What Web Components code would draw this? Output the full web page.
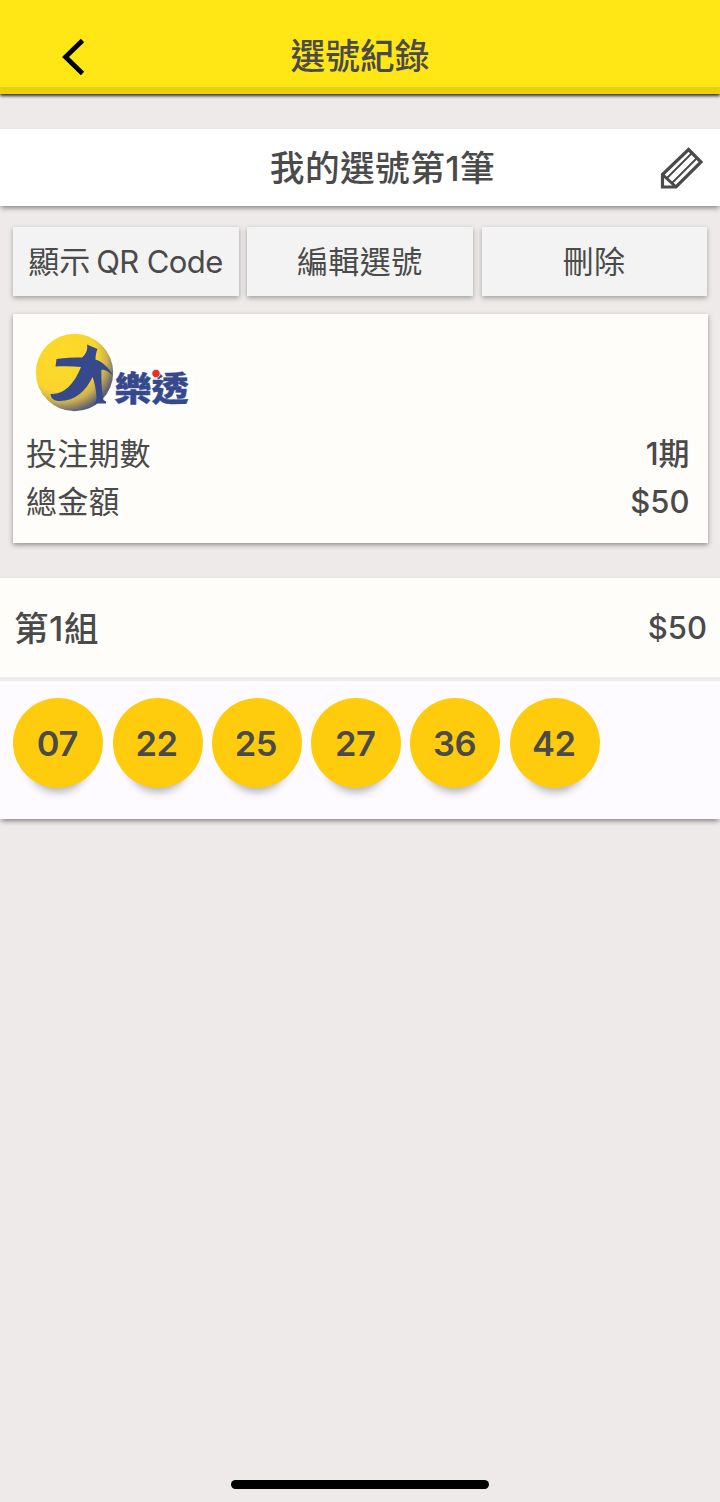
<!DOCTYPE html>
<html lang="zh-Hant">
<head>
<meta charset="utf-8">
<meta name="viewport" content="width=device-width, initial-scale=1">
<title>選號紀錄</title>
<style>
  body {
    margin: 0;
    background: #eeeaea;
    color: #4a4a4a;
    font-family: Inter, 'Noto Sans CJK TC', sans-serif;
    font-size: 31px;
  }
</style>
</head>
<body>
<record-page>
  <app-header slot="header">選號紀錄</app-header>
  <record-title>我的選號第1筆</record-title>
  <action-bar>
    <action-button>顯示<span style="margin-left: 6px; letter-spacing: -.6px">QR Code</span></action-button>
    <action-button style="letter-spacing: .4px">編輯選號</action-button>
    <action-button style="letter-spacing: .4px">刪除</action-button>
  </action-bar>
  <bet-card>
    <bet-row label="投注期數">1期</bet-row>
    <bet-row label="總金額">$50</bet-row>
  </bet-card>
  <number-group name="第1組" price="$50">
    <lotto-ball>07</lotto-ball>
    <lotto-ball>22</lotto-ball>
    <lotto-ball>25</lotto-ball>
    <lotto-ball>27</lotto-ball>
    <lotto-ball>36</lotto-ball>
    <lotto-ball>42</lotto-ball>
  </number-group>
</record-page>

<script>
// attach an open shadow root filled with the given markup
function render(el, html) {
  el.attachShadow({ mode: 'open' });
  const template = document.createElement('template');
  template.innerHTML = html;
  el.shadowRoot.appendChild(template.content.cloneNode(true));
}

class RecordPage extends HTMLElement {
  constructor() {
    super();
    render(this, `
      <style>
        :host {
          display: flex;
          flex-direction: column;
          box-sizing: border-box;
          height: 1502px;
          overflow: hidden;
        }
        main { flex: 1; padding-top: 35px; }
        .home {
          width: 258px;
          height: 9px;
          margin: 0 auto 13px;
          border-radius: 5px;
          background: #000;
        }
      </style>
      <slot name="header"></slot>
      <main><slot></slot></main>
      <div class="home"></div>
    `);
  }
}

class AppHeader extends HTMLElement {
  constructor() {
    super();
    render(this, `
      <style>
        :host {
          display: grid;
          grid-template-columns: 146px 1fr 146px;
          align-items: center;
          box-sizing: border-box;
          height: 94px;
          padding-top: 26px;
          background: #ffe716;
          border-bottom: 7px solid #e9d112;
          box-shadow: 0 2px 3px rgba(0, 0, 0, .8);
        }
        svg { display: block; margin: 0 auto; }
        h1 {
          margin: -2px 0 0;
          font-size: 34.7px;
          font-weight: 500;
          line-height: 50px;
          text-align: center;
        }
      </style>
      <svg width="24" height="38" viewBox="0 0 24 38">
        <path d="M21.500 2.500 4.500 19l17 16.500" fill="none" stroke="#000" stroke-width="4.800"/>
      </svg>
      <h1><slot></slot></h1>
    `);
  }
}

class RecordTitle extends HTMLElement {
  constructor() {
    super();
    render(this, `
      <style>
        :host {
          display: grid;
          grid-template-columns: 1fr 44px;
          align-items: center;
          box-sizing: border-box;
          height: 77px;
          padding: 0 16px 0 105px;
          background: #fff;
          box-shadow: 0 3px 5px -1px rgba(0, 0, 0, .45);
        }
        h2 {
          margin: 0;
          font-size: 34.7px;
          font-weight: 500;
          line-height: 50px;
          letter-spacing: .4px;
          text-align: center;
        }
        svg { margin: 0 0 0 -1px; }
      </style>
      <h2><slot></slot></h2>
      <svg width="44" height="44" viewBox="0 0 44 44" fill="none" stroke="#4a4a4a">
        <path d="M29.500 3.500 42 16 17 41H3.500V28.500Z" stroke-width="3.200"/>
        <path d="M3.500 28.500 17 41" stroke-width="3"/>
        <path d="M8 32 33 7M13 37 38 12" stroke-width="1.900"/>
      </svg>
    `);
  }
}

class ActionBar extends HTMLElement {
  constructor() {
    super();
    render(this, `
      <style>
        :host {
          display: grid;
          grid-template-columns: repeat(3, 1fr);
          gap: 8.500px;
          padding: 20.500px 12.500px 17.500px 13px;
        }
      </style>
      <slot></slot>
    `);
  }
}

class ActionButton extends HTMLElement {
  constructor() {
    super();
    render(this, `
      <style>
        :host { display: block; }
        button {
          display: block;
          width: 100%;
          height: 69.500px;
          padding: 0 1px 4px 0;
          border: 0;
          background: #f3f3f3;
          color: inherit;
          font: inherit;
          letter-spacing: inherit;
          white-space: nowrap;
          box-shadow: 0 2px 5px rgba(0, 0, 0, .33);
        }
      </style>
      <button><slot></slot></button>
    `);
  }
}

class LottoLogo extends HTMLElement {
  constructor() {
    super();
    render(this, `
      <style>
        :host { display: block; }
        svg { display: block; }
        text {
          font-family: 'Noto Sans CJK TC', sans-serif;
          font-size: 38px;
          font-weight: 900;
        }
      </style>
      <svg width="190" height="110" viewBox="0 0 190 110">
        <defs>
          <radialGradient id="sun" cx=".34" cy=".3" r=".78">
            <stop offset="0" stop-color="#fedb25"/>
            <stop offset=".58" stop-color="#f9d52d"/>
            <stop offset=".75" stop-color="#c9ae50"/>
            <stop offset=".9" stop-color="#6f6a6c"/>
            <stop offset="1" stop-color="#35457d"/>
          </radialGradient>
        </defs>
        <g fill="#fff">
          <circle cx="54.500" cy="52.500" r="43"/>
          <rect x="84" y="46" width="89" height="42" rx="9"/>
        </g>
        <circle cx="54.500" cy="52.500" r="38.700" fill="url(#sun)"/>
        <path fill="#35498c" d="M36.500 39C45 37.500 54 37.500 62 37.500C66 34 68 30 67 24.500L77.500 29C76 33 75.500 36 75.500 39.500C83 42 89 48 93 55.500C89 51.500 85 49.500 81.500 49.500C81 60 82 72 83.500 80L86 81.500V83.500H74C76 82 76.500 80 76.500 77C76 69 74.500 62 72.500 57C66 71 55 81 40 81C34 81 31 78.500 30.500 74C43 75 54 65 61 47C53 46 44 46 35.500 46.500Z"/>
        <text x="94.500" y="82" textLength="74" lengthAdjust="spacingAndGlyphs" fill="#35498c" stroke="#35498c" stroke-width=".4" transform="translate(0 7.400) scale(1 .9)">樂透</text>
        <circle cx="136" cy="53.500" r="4.200" fill="#e43025" stroke="#fff" stroke-width=".8"/>
      </svg>
    `);
  }
}

class BetCard extends HTMLElement {
  constructor() {
    super();
    render(this, `
      <style>
        :host {
          display: block;
          box-sizing: border-box;
          height: 229.500px;
          margin: 0 12.500px 34.500px 13px;
          padding: 6px 18px 0 13px;
          background: #fefdf9;
          box-shadow: 0 2px 5px rgba(0, 0, 0, .4);
        }
        lotto-logo { margin-left: -6px; }
      </style>
      <lotto-logo></lotto-logo>
      <slot></slot>
    `);
  }
}

class BetRow extends HTMLElement {
  constructor() {
    super();
    render(this, `
      <style>
        :host {
          display: flex;
          justify-content: space-between;
          height: 48px;
          line-height: 48px;
        }
        span { letter-spacing: .2px; }
        b { font-weight: 500; }
      </style>
      <span>${this.getAttribute('label')}</span>
      <b><slot></slot></b>
    `);
  }
}

class NumberGroup extends HTMLElement {
  constructor() {
    super();
    render(this, `
      <style>
        :host {
          display: block;
          box-shadow: 0 3px 5px -1px rgba(0, 0, 0, .45);
        }
        header {
          display: flex;
          align-items: center;
          justify-content: space-between;
          box-sizing: border-box;
          height: 103px;
          padding: 0 13px 0 14px;
          background: #fefdf9;
          border-bottom: 4px solid #eeecec;
        }
        h3 {
          margin: -3px 0 0;
          font-size: 34.500px;
          font-weight: 500;
          letter-spacing: .6px;
        }
        b { font-weight: 500; }
        .balls {
          display: flex;
          gap: 9.300px;
          box-sizing: border-box;
          height: 138px;
          padding: 17.300px 13.300px;
          background: #fdfbff;
        }
      </style>
      <header>
        <h3>${this.getAttribute('name')}</h3>
        <b>${this.getAttribute('price')}</b>
      </header>
      <div class="balls"><slot></slot></div>
    `);
  }
}

class LottoBall extends HTMLElement {
  constructor() {
    super();
    render(this, `
      <style>
        :host {
          display: block;
          box-sizing: border-box;
          width: 90px;
          height: 90px;
          padding-right: 2px;
          border-radius: 50%;
          background: #ffcc0d;
          box-shadow: 0 18px 9px -14px rgba(0, 0, 0, .3);
          font-size: 34.500px;
          font-weight: 600;
          line-height: 91px;
          letter-spacing: -.4px;
          text-align: center;
        }
      </style>
      <slot></slot>
    `);
  }
}

customElements.define('record-page', RecordPage);
customElements.define('app-header', AppHeader);
customElements.define('record-title', RecordTitle);
customElements.define('action-bar', ActionBar);
customElements.define('action-button', ActionButton);
customElements.define('lotto-logo', LottoLogo);
customElements.define('bet-card', BetCard);
customElements.define('bet-row', BetRow);
customElements.define('number-group', NumberGroup);
customElements.define('lotto-ball', LottoBall);
</script>
</body>
</html>
